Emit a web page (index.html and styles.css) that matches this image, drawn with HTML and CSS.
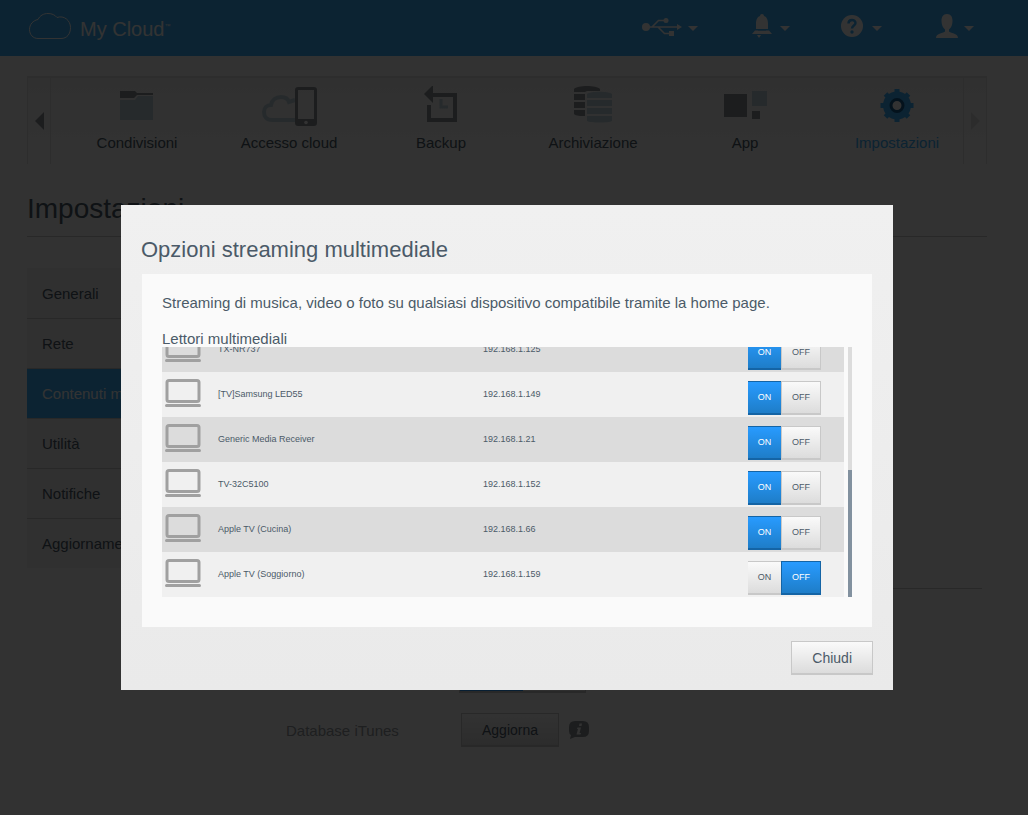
FILE: index.html
```html
<!DOCTYPE html>
<html lang="it">
<head>
<meta charset="UTF-8">
<meta name="viewport" content="width=device-width, initial-scale=1.0">
<title>My Cloud - Impostazioni</title>
<link rel="stylesheet" href="styles.css">
</head>
<body>

<header class="header">
    <a href="#" class="logo">
        <svg width="44" height="28" viewBox="0 0 44 28" fill="none" stroke="currentColor"><path d="M10 26.500C5 26.500 1.500 22.500 1.500 17.500C1.500 12.500 5 8.500 10 7.500C12 3.500 15.500 1.500 20 1.500C24 1.500 27 3 29 5.500C36 3 42.500 8.500 42.500 15.500C42.500 22 39 26.500 33 26.500Z"/></svg>
        <span class="logo-text">My Cloud<small>™</small></span>
    </a>
    <nav class="header-menu">
        <button class="header-button" aria-label="USB">
            <svg width="40" height="24" viewBox="0 0 40 24" fill="currentColor"><circle cx="4" cy="13" r="4"/><path d="M35 10l5 3-5 3z"/><circle cx="24" cy="6.500" r="2.500"/><rect x="27" y="17" width="5" height="5"/><path d="M4 13H36M10 13L16.500 6.500H22M16 13L22.500 19.500H28" fill="none" stroke="currentColor" stroke-width="1.600"/></svg>
            <span class="caret"></span>
        </button>
        <button class="header-button" aria-label="Avvisi">
            <svg width="22" height="24" viewBox="0 0 22 24" fill="currentColor"><path d="M8 2a2 2 0 0 1 4 0c3 1 4 4 4 8v5H4v-5c0-4 1-7 4-8zM3 16.500h14l3 3.500H0zM5 21h4l-2 3z"/><path d="M6 16h8" stroke="#3caffa" stroke-width="1"/></svg>
            <span class="caret"></span>
        </button>
        <button class="header-button" aria-label="Guida">
            <svg width="25" height="24" viewBox="0 0 25 24"><circle cx="11" cy="12" r="11" fill="currentColor"/><path d="M7.500 9.500C7.500 4.800 14.500 4.800 14.500 9C14.500 11.500 11 11.600 11 14.500" fill="none" stroke="#3caffa" stroke-width="2.500"/><circle cx="11" cy="18" r="1.700" fill="#3caffa"/></svg>
            <span class="caret"></span>
        </button>
        <button class="header-button" aria-label="Utente">
            <svg width="22" height="24" viewBox="0 0 22 24" fill="currentColor"><path d="M11 0c4 0 5.500 3 5.500 7 0 4-1.500 7-3.500 8.500v2c1 1.500 9 1.500 9 6.500H0c0-5 8-5 9-6.500v-2C7 14 5.500 11 5.500 7 5.500 3 7 0 11 0z"/></svg>
            <span class="caret"></span>
        </button>
    </nav>
</header>

<main class="page">
    <nav class="main-nav">
        <button class="nav-arrow" aria-label="Precedente"><svg width="9" height="18" viewBox="0 0 9 18"><path d="M9 0v18L0 9z" fill="#8c9196"/></svg></button>
        <div class="nav-items">
            <a href="#" class="nav-item">
                <svg width="34" height="40" viewBox="0 0 34 40"><path d="M0 5h15l2 2h16v2H17l-3 3H0z" fill="#8c9196"/><path d="M0 14h15l3-4h15v24H0z" fill="#bed2dc"/></svg>
                Condivisioni
            </a>
            <a href="#" class="nav-item">
                <svg width="56" height="40" viewBox="0 0 56 40"><path d="M34 34H11C5 34 3 30 3 26s3-7 7-7c1-5 5-8 10-8 4 0 7 2 8 5l6-2" fill="none" stroke="#bed2dc" stroke-width="4"/><path d="M37 1h16q3 0 3 3v33q0 3-3 3H37q-3 0-3-3V4q0-3 3-3zM37 4v29h16V4z" fill="#8c9196" fill-rule="evenodd"/><circle cx="45" cy="36.500" r="1.800" fill="#fafafa"/></svg>
                Accesso cloud
            </a>
            <a href="#" class="nav-item">
                <svg width="34" height="40" viewBox="0 0 34 40"><path d="M9 9h22v25H5V19" fill="none" stroke="#8c9196" stroke-width="4"/><path d="M9-1v18L0 8z" fill="#8c9196"/><path d="M17 13v8h7" fill="none" stroke="#bed2dc" stroke-width="3"/></svg>
                Backup
            </a>
            <a href="#" class="nav-item">
                <svg width="38" height="40" viewBox="0 0 38 40"><path d="M0 3C3-1 23-1 26 3v2H13l-2 1H0zM0 8h11v6H0zM0 16h11v6H0zM0 24h11v6C7 30 2 30 0 28z" fill="#8c9196"/><path d="M13 8c3-3 22-3 25 0v4H13zM13 14h25v6H13zM13 22h25v6H13zM13 30h25v5c-3 2-22 2-25 0z" fill="#bed2dc"/></svg>
                Archiviazione
            </a>
            <a href="#" class="nav-item">
                <svg width="43" height="40" viewBox="0 0 43 40"><path d="M0 8h23v23H0zM28 25h8v8h-8z" fill="#8c9196"/><path d="M28 5h15v15H28z" fill="#bed2dc"/></svg>
                App
            </a>
            <a href="#" class="nav-item nav-item-active">
                <svg width="34" height="40" viewBox="0 0 34 40"><g fill="none" stroke="#3caffa"><path d="M17 3v33M.500 19.500h33M5.500 8l23 23M28.500 8l-23 23" stroke-width="5"/></g><circle cx="17" cy="19.500" r="14" fill="#3caffa"/><circle cx="17" cy="19.500" r="6" fill="#fafafa" stroke="#145a8c" stroke-width="3"/></svg>
                Impostazioni
            </a>
        </div>
        <button class="nav-arrow nav-arrow-disabled" aria-label="Successivo" disabled><svg width="9" height="18" viewBox="0 0 9 18"><path d="M0 0v18l9-9z" fill="#dcdcdc"/></svg></button>
    </nav>

    <h1 class="page-title">Impostazioni</h1>

    <div class="columns">
        <nav class="sidebar">
            <a href="#" class="sidebar-item">Generali</a>
            <a href="#" class="sidebar-item">Rete</a>
            <a href="#" class="sidebar-item sidebar-item-active">Contenuti multimediali</a>
            <a href="#" class="sidebar-item">Utilità</a>
            <a href="#" class="sidebar-item">Notifiche</a>
            <a href="#" class="sidebar-item">Aggiornamento firmware</a>
        </nav>
        <section class="settings">
            <div class="settings-rule"></div>
            <div class="settings-switch">
                <button class="switch-part switch-part-on" aria-label="Attiva"></button>
                <button class="switch-part" aria-label="Disattiva"></button>
            </div>
            <div class="settings-row">
                <span class="settings-label">Database iTunes</span>
                <button class="button">Aggiorna</button>
                <svg width="20" height="18" viewBox="0 0 20 18"><path d="M6 0h8q6 0 6 6v4q0 6-6 6H6l-5 2 1-4Q0 13 0 10V6Q0 0 6 0z" fill="#8c9196"/><path d="M10.500 2.500h2.500l-.500 2.500H10zM8.500 6.500h3.500l-1.500 5.500h1.500l-.500 1.500H7.500l1.500-5.500H8z" fill="#fafafa"/></svg>
            </div>
        </section>
    </div>
</main>

<div class="overlay">
    <div class="dialog" role="dialog" aria-labelledby="dialog-title">
        <h2 class="dialog-title" id="dialog-title">Opzioni streaming multimediale</h2>
        <div class="dialog-content">
            <p class="dialog-text">Streaming di musica, video o foto su qualsiasi dispositivo compatibile tramite la home page.</p>
            <h3 class="list-title">Lettori multimediali</h3>
            <div class="list">
                <div class="list-view">
                    <table class="devices">
                        <tbody id="devices"></tbody>
                    </table>
                </div>
                <div class="scrollbar"><div class="scrollbar-thumb"></div></div>
            </div>
        </div>
        <div class="dialog-footer">
            <button class="button">Chiudi</button>
        </div>
    </div>
</div>

<script src="script.js"></script>
</body>
</html>
```
FILE: styles.css
```css
* {
    box-sizing: border-box;
}
body {
    margin: 0;
    font-family: "Liberation Sans", Helvetica, Arial, sans-serif;
    font-size: 15px;
    color: #4b5a68;
    background: #fafafa;
}
button {
    font-family: inherit;
    color: inherit;
    margin: 0;
    cursor: pointer;
}
a {
    color: inherit;
    text-decoration: none;
}

/* header */
.header {
    display: flex;
    align-items: center;
    justify-content: space-between;
    height: 56px;
    padding: 0 54px 4px 28px;
    background: #3caffa;
    color: #fff;
}
.logo {
    display: flex;
    align-items: center;
    gap: 8px;
}
.logo-text {
    padding-top: 6px;
    font-size: 20px;
}
.logo small {
    font-size: 6px;
    vertical-align: super;
}
.header-menu {
    display: flex;
}
.header-button {
    display: flex;
    align-items: center;
    justify-content: flex-end;
    gap: 6px;
    width: 92px;
    padding: 0;
    border: none;
    background: none;
}
.header-button svg {
    flex: none;
}
.caret {
    margin-top: 4px;
    border: 5px solid transparent;
    border-top-color: #fff;
    border-bottom: 0;
}

/* main navigation */
.page {
    max-width: 960px;
    margin: 20px 41px 0 27px;
}
.main-nav {
    display: flex;
    height: 88px;
    border: 1px solid #e1e1e1;
    border-top-width: 2px;
    border-bottom: none;
    background: linear-gradient(#f0f0f0, #fafafa);
}
.nav-arrow {
    display: flex;
    align-items: center;
    justify-content: center;
    width: 23px;
    padding: 0;
    border: none;
    border-right: 1px solid #e1e1e1;
    background: none;
}
.nav-arrow-disabled {
    border-right: none;
    border-left: 1px solid #e1e1e1;
}
.nav-items {
    flex: 1;
    display: grid;
    grid-template-columns: repeat(6, 1fr);
    margin: 0 -10px 0 10px;
}
.nav-item {
    display: flex;
    flex-direction: column;
    align-items: center;
    gap: 8px;
    padding-top: 8px;
}
.nav-item-active {
    color: #3caffa;
}

/* page content */
.page-title {
    margin: 29px 0 31px;
    padding-bottom: 11px;
    border-bottom: 1px solid #c8c8c8;
    font-size: 28px;
    line-height: 32px;
    font-weight: normal;
}
.columns {
    display: flex;
    align-items: flex-start;
    gap: 19px;
}
.sidebar {
    width: 240px;
    background: #f0f0f0;
}
.sidebar-item {
    display: block;
    height: 50px;
    padding: 0 15px;
    border-top: 1px solid #c8c8c8;
    line-height: 50px;
    white-space: nowrap;
}
.sidebar-item:first-child {
    border-top-color: transparent;
}
.sidebar-item-active {
    background: #3caffa;
    color: #fff;
}
.settings {
    flex: 1;
    padding: 320px 5px 0 0;
}
.settings-rule {
    height: 1px;
    background: #c8c8c8;
}
.settings-switch {
    display: flex;
    width: 127px;
    height: 34px;
    margin: 70px 0 20px 173px;
    border: 1px solid #c8c8c8;
    border-bottom-width: 2px;
}
.switch-part {
    flex: 1;
    border: none;
    background: #ebebeb;
}
.switch-part-on {
    background: #289bff;
}
.settings-row {
    display: flex;
    align-items: center;
}
.settings-label {
    width: 175px;
    color: #969ba0;
}
.settings-row .button {
    width: 98px;
    margin-right: 10px;
}

/* dialog */
.overlay {
    position: fixed;
    inset: 0;
    padding: 205px 14px 0 0;
    background: rgba(0, 0, 0, 0.8);
}
.dialog {
    max-width: 772px;
    margin: 0 auto;
    padding: 32px 20px 15px;
    background: linear-gradient(#f0f0f0, #eaeaea);
}
.dialog-title {
    margin: 0 0 11px;
    font-size: 22px;
    line-height: 26px;
    font-weight: normal;
}
.dialog-content {
    margin: 0 1px 14px;
    padding: 20px 20px 30px;
    background: #fafafa;
}
.dialog-text,
.list-title {
    margin: 0;
    font-size: 15px;
    line-height: 18px;
    font-weight: normal;
}
.dialog-text {
    margin-bottom: 18px;
}
.list-title {
    height: 17px;
}
.dialog-footer {
    display: flex;
    justify-content: flex-end;
}
.button {
    height: 34px;
    padding: 0 20px;
    border: 1px solid #c8c8c8;
    border-bottom-width: 2px;
    background: linear-gradient(#fafafa, #dcdcdc);
    font-size: 14px;
}

/* media players */
.list {
    display: flex;
    gap: 4px;
}
.list-view {
    flex: 1;
    display: flex;
    align-items: flex-end;
    height: 250px;
    overflow: hidden;
}
.devices {
    width: 100%;
    border-collapse: collapse;
    table-layout: fixed;
    font-size: 9px;
}
.devices tr {
    height: 45px;
    background: #f0f0f0;
}
.devices tr:nth-child(odd) {
    background: #dcdcdc;
}
.devices td {
    padding: 0 0 2px;
}
.devices svg {
    display: block;
    margin-left: 3px;
}
.col-icon {
    width: 56px;
}
.col-name {
    width: 265px;
}
.col-switch {
    width: 96px;
}
.switch {
    display: flex;
    margin-top: 8px;
}
.switch button {
    width: 33px;
    height: 34px;
    padding: 0;
    border: solid #c8c8c8;
    border-width: 1px 0 2px;
    background: linear-gradient(#fafafa, #dcdcdc);
    font-size: 9px;
}
.switch button:last-child {
    width: 40px;
    border-width: 1px 1px 2px;
}
.switch .selected {
    border-color: #1464a5;
    background: linear-gradient(#289bff, #1e7dc8);
    color: #fff;
}
.scrollbar {
    display: flex;
    align-items: flex-end;
    width: 4px;
    background: #dcdcdc;
}
.scrollbar-thumb {
    width: 100%;
    height: 127px;
    background: #82919f;
}
```
FILE: script.js
```js
const devices = [
    { name: 'TX-NR737', ip: '192.168.1.125', on: true },
    { name: '[TV]Samsung LED55', ip: '192.168.1.149', on: true },
    { name: 'Generic Media Receiver', ip: '192.168.1.21', on: true },
    { name: 'TV-32C5100', ip: '192.168.1.152', on: true },
    { name: 'Apple TV (Cucina)', ip: '192.168.1.66', on: true },
    { name: 'Apple TV (Soggiorno)', ip: '192.168.1.159', on: false }
];

const icon = '<svg width="36" height="30" viewBox="0 1 36 30"><rect x="2" y="2.500" width="32" height="21" rx="2" fill="none" stroke="#a0a0a0" stroke-width="3"/><path d="M1.500 27.500h33" stroke="#a0a0a0" stroke-width="3" stroke-linecap="round"/></svg>';

document.getElementById('devices').innerHTML = devices.map(d => `
    <tr>
        <td class="col-icon">${icon}</td>
        <td class="col-name">${d.name}</td>
        <td>${d.ip}</td>
        <td class="col-switch">
            <div class="switch" role="group" aria-label="${d.name}">
                <button class="${d.on ? 'selected' : ''}">ON</button>
                <button class="${d.on ? '' : 'selected'}">OFF</button>
            </div>
        </td>
    </tr>`).join('');

// un solo pulsante selezionato per riga
document.querySelectorAll('.switch button').forEach(button => {
    button.addEventListener('click', () => {
        button.parentElement.querySelector('.selected').classList.remove('selected');
        button.classList.add('selected');
    });
});
```
